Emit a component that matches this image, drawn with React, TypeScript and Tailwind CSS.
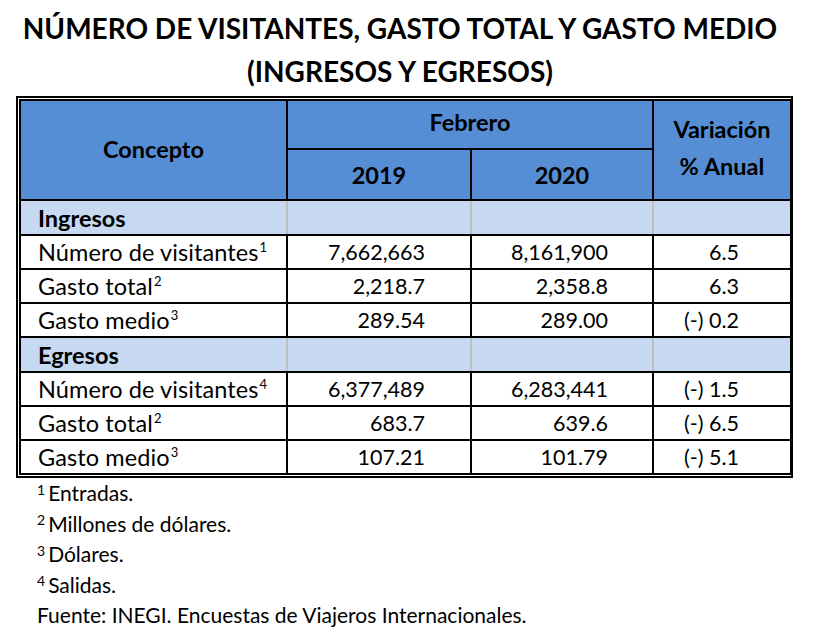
import React from 'react'

const font = { fontFamily: 'Lato, "Open Sans", sans-serif' }

type Row = { label: string; sup: string; a: string; b: string; v: string }

const ingresos: Row[] = [
  { label: 'Número de visitantes', sup: '1', a: '7,662,663', b: '8,161,900', v: '6.5' },
  { label: 'Gasto total', sup: '2', a: '2,218.7', b: '2,358.8', v: '6.3' },
  { label: 'Gasto medio', sup: '3', a: '289.54', b: '289.00', v: '(-) 0.2' },
]

const egresos: Row[] = [
  { label: 'Número de visitantes', sup: '4', a: '6,377,489', b: '6,283,441', v: '(-) 1.5' },
  { label: 'Gasto total', sup: '2', a: '683.7', b: '639.6', v: '(-) 6.5' },
  { label: 'Gasto medio', sup: '3', a: '107.21', b: '101.79', v: '(-) 5.1' },
]

function SectionRow({ title }: { title: string }) {
  return (
    <tr className="h-[35px] bg-[#c6d9f1]">
      <td className="border-2 border-black border-r-[#bfbfbf] pl-[17px] font-bold text-[23.5px] leading-[26px]">{title}</td>
      <td className="border-2 border-black border-x-[#bfbfbf]"></td>
      <td className="border-2 border-black border-x-[#bfbfbf]"></td>
      <td className="border-2 border-black border-l-[#bfbfbf]"></td>
    </tr>
  )
}

function DataRow({ r }: { r: Row }) {
  return (
    <tr className="h-[34px]">
      <td className="border-2 border-black pl-[17px] whitespace-nowrap text-[23.5px] leading-[26px] tracking-[0.1px]">
        {r.label}
        <sup className="relative top-[-9px] align-baseline text-[13px] leading-none ml-px">{r.sup}</sup>
      </td>
      <td className="border-2 border-black text-right pr-[45px] leading-[26px]">{r.a}</td>
      <td className="border-2 border-black text-right pr-[44px] leading-[26px]">{r.b}</td>
      <td className="border-2 border-black text-right pr-[51px] leading-[26px]">{r.v}</td>
    </tr>
  )
}

export default function App() {
  return (
    <div className="w-[814px] h-[642px] bg-white text-black" style={font}>
      <div className="w-[800px] pt-[7px] text-center font-bold text-[28px] leading-[43px]">
        <div>NÚMERO DE VISITANTES, GASTO TOTAL Y GASTO MEDIO</div>
        <div>(INGRESOS Y EGRESOS)</div>
      </div>

      <div className="ml-[16px] mt-[3px] w-[777px] border-2 border-black p-px">
        <table className="w-[771px] table-fixed border-collapse border-2 border-black text-[21.5px]">
          <colgroup>
            <col className="w-[267px]" />
            <col className="w-[184px]" />
            <col className="w-[182px]" />
            <col className="w-[138px]" />
          </colgroup>
          <thead className="bg-[#558ed5] font-bold text-[23.5px]">
            <tr className="h-[49px]">
              <th rowSpan={2} className="border-2 border-black text-center">Concepto</th>
              <th colSpan={2} className="border-2 border-black text-center pb-[4px]">Febrero</th>
              <th rowSpan={2} className="border-2 border-black text-center leading-[37px] pb-[4px]">
                Variación
                <br />% Anual
              </th>
            </tr>
            <tr className="h-[51px]">
              <th className="border-2 border-black text-center pt-[2px]">2019</th>
              <th className="border-2 border-black text-center pt-[2px]">2020</th>
            </tr>
          </thead>
          <tbody>
            <SectionRow title="Ingresos" />
            {ingresos.map((r) => (
              <DataRow key={'i' + r.label} r={r} />
            ))}
            <SectionRow title="Egresos" />
            {egresos.map((r) => (
              <DataRow key={'e' + r.label} r={r} />
            ))}
          </tbody>
        </table>
      </div>

      <div className="pl-[37px] text-[21px] leading-[30.5px]">
        <div><sup className="text-[14px] top-[-0.45em] mr-[3px]">1</sup>Entradas.</div>
        <div><sup className="text-[14px] top-[-0.45em] mr-[3px]">2</sup>Millones de dólares.</div>
        <div><sup className="text-[14px] top-[-0.45em] mr-[3px]">3</sup>Dólares.</div>
        <div><sup className="text-[14px] top-[-0.45em] mr-[3px]">4</sup>Salidas.</div>
        <div>Fuente: INEGI. Encuestas de Viajeros Internacionales.</div>
      </div>
    </div>
  )
}
